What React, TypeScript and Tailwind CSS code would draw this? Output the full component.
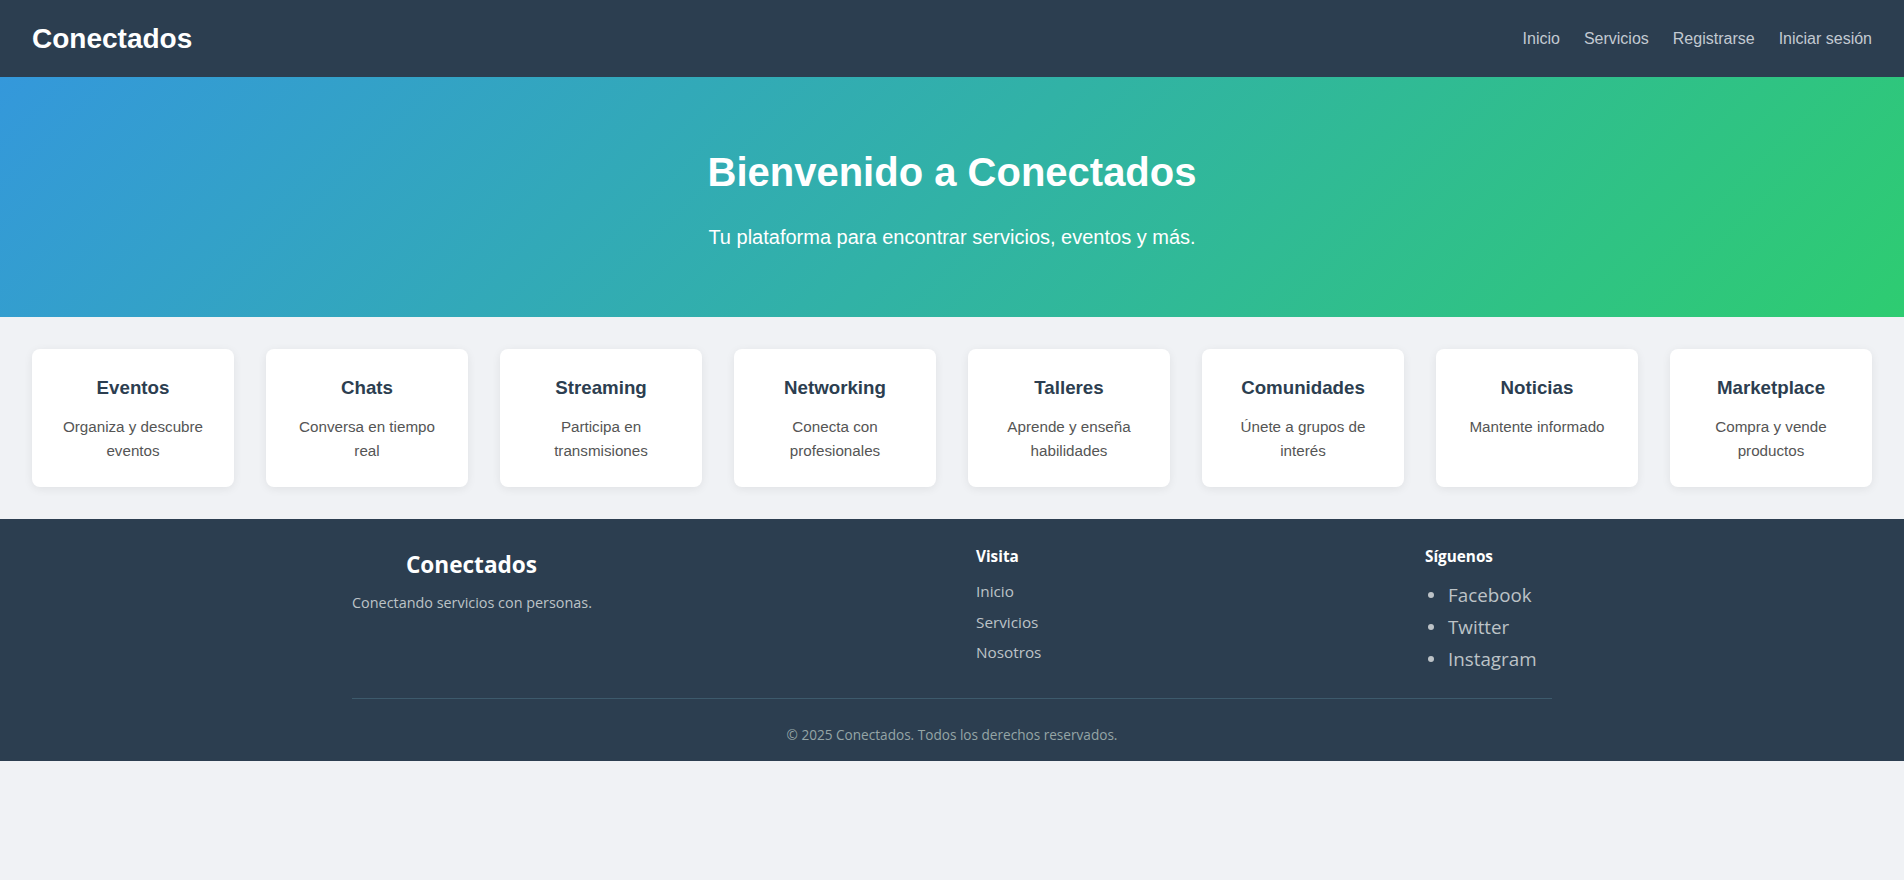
import React from "react";

const cards = [
  { t: "Eventos", d: "Organiza y descubre eventos" },
  { t: "Chats", d: "Conversa en tiempo real" },
  { t: "Streaming", d: "Participa en transmisiones" },
  { t: "Networking", d: "Conecta con profesionales" },
  { t: "Talleres", d: "Aprende y enseña habilidades" },
  { t: "Comunidades", d: "Únete a grupos de interés" },
  { t: "Noticias", d: "Mantente informado" },
  { t: "Marketplace", d: "Compra y vende productos" },
];

export default function App() {
  return (
    <div className="min-h-screen bg-[#f0f2f5] font-['Liberation_Sans',Arial,sans-serif]">
      <header className="h-[77px] bg-[#2c3e50] flex items-center justify-between px-8">
        <div className="text-[28px] font-bold text-white leading-none">Conectados</div>
        <nav className="flex gap-6 text-[16px] text-[#c3cad2]">
          <a>Inicio</a>
          <a>Servicios</a>
          <a>Registrarse</a>
          <a>Iniciar sesión</a>
        </nav>
      </header>

      <section className="h-[240px] bg-[linear-gradient(135deg,#3498db,#2ecc71)] text-white text-center flex flex-col items-center pt-[72px]">
        <h1 className="text-[40px] font-bold leading-[46px]">Bienvenido a Conectados</h1>
        <p className="text-[20px] leading-[23px] mt-[31px]">Tu plataforma para encontrar servicios, eventos y más.</p>
      </section>

      <section className="grid grid-cols-8 gap-8 p-8">
        {cards.map((c) => (
          <div key={c.t} className="bg-white rounded-lg shadow-[0_2px_10px_rgba(0,0,0,0.07)] p-6 text-center h-[138px]">
            <h3 className="text-[18.72px] font-bold leading-[30px] text-[#2c3e50]">{c.t}</h3>
            <p className="mt-3 text-[15.2px] leading-[24px] text-[#555]">{c.d}</p>
          </div>
        ))}
      </section>

      <footer className="bg-[#2c3e50] h-[242px] font-['Open_Sans',sans-serif]">
        <div className="w-[1200px] mx-auto pt-[26px]">
          <div className="flex justify-between h-[152px]">
            <div className="w-[239px] text-center">
              <h2 className="text-[22.6px] font-bold text-white leading-[32px] mt-[4px]">Conectados</h2>
              <p className="text-[14.4px] text-[#bdc3c7] leading-[20px] mt-[12px] whitespace-nowrap">Conectando servicios con personas.</p>
            </div>
            <div className="w-[70px] ml-[385px]">
              <h4 className="text-[15.3px] font-bold text-white leading-[22px]">Visita</h4>
              <ul className="mt-[9px] text-[15.3px] text-[#bdc3c7]">
                <li className="leading-[30.5px]">Inicio</li>
                <li className="leading-[30.5px]">Servicios</li>
                <li className="leading-[30.5px]">Nosotros</li>
              </ul>
            </div>
            <div className="w-[127px] ml-auto">
              <h4 className="text-[15.3px] font-bold text-white leading-[22px]">Síguenos</h4>
              <ul className="mt-[12px] text-[18.8px] text-[#bdc3c7]">
                {["Facebook", "Twitter", "Instagram"].map((s) => (
                  <li key={s} className="leading-[32px] flex items-center">
                    <span className="w-[6px] h-[6px] rounded-full bg-[#bdc3c7] ml-[3px] mr-[14px]" />
                    {s}
                  </li>
                ))}
              </ul>
            </div>
          </div>
          <div className="border-t border-[#3d5a6c] mt-[1px]" />
          <p className="text-center text-[13.6px] text-[#95a5a6] leading-[20px] mt-[26px]">© 2025 Conectados. Todos los derechos reservados.</p>
        </div>
      </footer>
    </div>
  );
}
